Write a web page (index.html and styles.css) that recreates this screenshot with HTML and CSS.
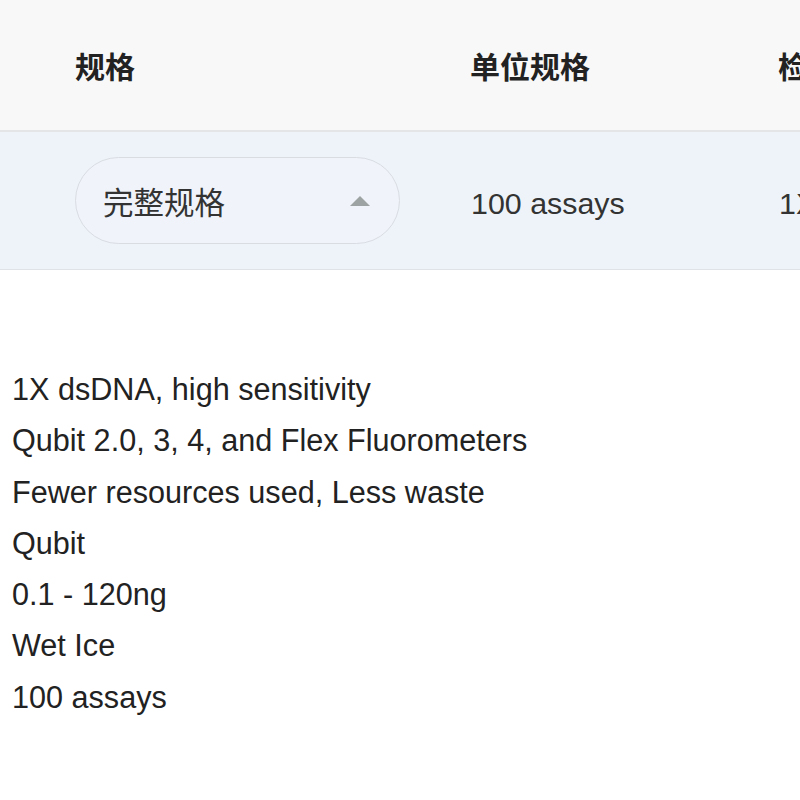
FILE: index.html
```html
<!DOCTYPE html>
<html lang="zh">
<head>
<meta charset="utf-8">
<link rel="stylesheet" href="styles.css">
</head>
<body>
<div class="table">
  <div class="row head">
    <div class="cell c1">规格</div>
    <div class="cell c2">单位规格</div>
    <div class="cell c3">检测</div>
  </div>
  <div class="row body">
    <div class="cell c1">
      <div class="select">
        <span>完整规格</span>
        <span class="caret"></span>
      </div>
    </div>
    <div class="cell c2 val">100 assays</div>
    <div class="cell c3 val">1X dsDNA</div>
  </div>
</div>
<ul class="specs">
  <li>1X dsDNA, high sensitivity</li>
  <li>Qubit 2.0, 3, 4, and Flex Fluorometers</li>
  <li>Fewer resources used, Less waste</li>
  <li>Qubit</li>
  <li>0.1 - 120ng</li>
  <li>Wet Ice</li>
  <li>100 assays</li>
</ul>
</body>
</html>
```
FILE: styles.css
```css
html, body {
  margin: 0;
  padding: 0;
  background: #ffffff;
  overflow: hidden;
}
body {
  width: 800px;
  font-family: "Liberation Sans", "Noto Sans CJK SC", sans-serif;
  color: #333;
}
.table {
  width: 800px;
  overflow: hidden;
}
.row {
  display: grid;
  grid-template-columns: 395px 308px 300px;
  padding-left: 75px;
  align-items: center;
  white-space: nowrap;
}
.head {
  height: 130px;
  background: #f8f8f8;
  border-bottom: 2px solid #e3e5e6;
  font-family: "Noto Sans CJK SC", sans-serif;
  font-weight: 700;
  font-size: 30px;
  color: #222;
}
.body {
  height: 137px;
  background: #eef3fa;
  border-bottom: 1px solid #dfe3e8;
  font-size: 30.4px;
}
.val {
  padding-top: 6px;
  padding-left: 1px;
}
.select {
  box-sizing: border-box;
  width: 325px;
  height: 87px;
  border: 1px solid #d9dde2;
  border-radius: 44px;
  background: #f0f4fa;
  display: flex;
  align-items: center;
  justify-content: space-between;
  padding: 0 29px 0 27px;
  font-family: "Noto Sans CJK SC", sans-serif;
  font-size: 30.5px;
  color: #333;
}
.caret {
  width: 0;
  height: 0;
  border-left: 10px solid transparent;
  border-right: 10px solid transparent;
  border-bottom: 10px solid #9da2a2;
}
.specs {
  list-style: none;
  margin: 94px 0 0;
  padding: 0 0 0 12px;
  font-size: 30.6px;
  line-height: 51.3px;
  color: #222;
}
```
